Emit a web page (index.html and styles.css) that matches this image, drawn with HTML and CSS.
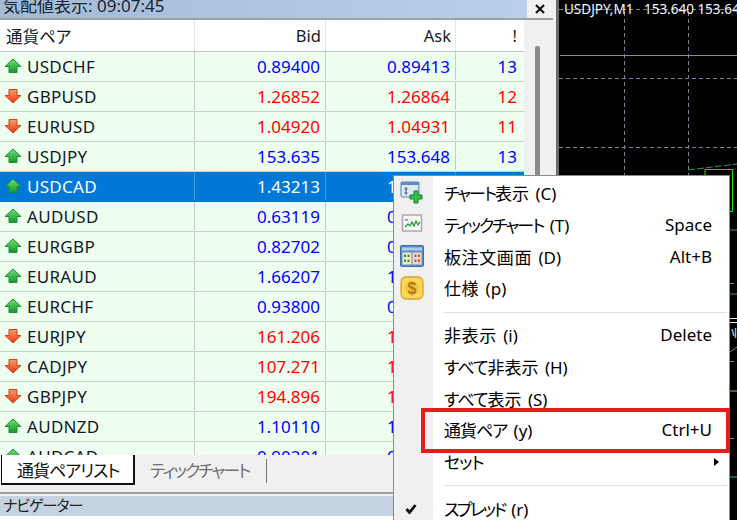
FILE: index.html
```html
<!DOCTYPE html>
<html lang="ja">
<head>
<meta charset="utf-8">
<title>気配値表示</title>
<link rel="stylesheet" href="styles.css">
</head>
<body>
<svg width="0" height="0" class="defs">
  <defs>
    <linearGradient id="gu" x1="0" y1="0" x2="0" y2="1"><stop offset="0" stop-color="#6fe06f"/><stop offset="1" stop-color="#129a2a"/></linearGradient>
    <linearGradient id="gd" x1="0" y1="0" x2="0" y2="1"><stop offset="0" stop-color="#ff9a6a"/><stop offset="1" stop-color="#e8380f"/></linearGradient>
    <symbol id="up" viewBox="0 0 18 16"><path d="M9 1 L17 8.500 L13 8.500 L13 14.500 L5 14.500 L5 8.500 L1 8.500 Z" fill="url(#gu)" stroke="#1c8a3a" stroke-width="1" stroke-linejoin="round"/></symbol>
    <symbol id="down" viewBox="0 0 18 16"><path d="M5 1.500 L13 1.500 L13 7.500 L17 7.500 L9 15 L1 7.500 L5 7.500 Z" fill="url(#gd)" stroke="#c8451c" stroke-width="1" stroke-linejoin="round"/></symbol>
  </defs>
</svg>
<div class="app">
  <section class="panel">
    <div class="titlebar"><span class="title">気配値表示: 09:07:45</span><span class="close"><svg width="10" height="10" viewBox="0 0 10 10"><path d="M1 1 L9 9 M9 1 L1 9" stroke="#111" stroke-width="2.200"/></svg></span></div>
    <div class="rule"></div>
    <div class="listarea">
      <div class="table">
        <div class="row head"><div class="c sym">通貨ペア</div><div class="c num">Bid</div><div class="c num">Ask</div><div class="c num last">!</div></div>
        <div class="row up"><div class="c sym"><svg class="arrow"><use href="#up"/></svg>USDCHF</div><div class="c num">0.89400</div><div class="c num">0.89413</div><div class="c num last">13</div></div>
        <div class="row down"><div class="c sym"><svg class="arrow"><use href="#down"/></svg>GBPUSD</div><div class="c num">1.26852</div><div class="c num">1.26864</div><div class="c num last">12</div></div>
        <div class="row down"><div class="c sym"><svg class="arrow"><use href="#down"/></svg>EURUSD</div><div class="c num">1.04920</div><div class="c num">1.04931</div><div class="c num last">11</div></div>
        <div class="row up"><div class="c sym"><svg class="arrow"><use href="#up"/></svg>USDJPY</div><div class="c num">153.635</div><div class="c num">153.648</div><div class="c num last">13</div></div>
        <div class="row sel"><div class="c sym"><svg class="arrow"><use href="#up"/></svg>USDCAD</div><div class="c num">1.43213</div><div class="c num">1.43226</div><div class="c num last">13</div></div>
        <div class="row up"><div class="c sym"><svg class="arrow"><use href="#up"/></svg>AUDUSD</div><div class="c num">0.63119</div><div class="c num">0.63130</div><div class="c num last">11</div></div>
        <div class="row up"><div class="c sym"><svg class="arrow"><use href="#up"/></svg>EURGBP</div><div class="c num">0.82702</div><div class="c num">0.82715</div><div class="c num last">13</div></div>
        <div class="row up"><div class="c sym"><svg class="arrow"><use href="#up"/></svg>EURAUD</div><div class="c num">1.66207</div><div class="c num">1.66229</div><div class="c num last">22</div></div>
        <div class="row up"><div class="c sym"><svg class="arrow"><use href="#up"/></svg>EURCHF</div><div class="c num">0.93800</div><div class="c num">0.93815</div><div class="c num last">15</div></div>
        <div class="row down"><div class="c sym"><svg class="arrow"><use href="#down"/></svg>EURJPY</div><div class="c num">161.206</div><div class="c num">161.220</div><div class="c num last">14</div></div>
        <div class="row down"><div class="c sym"><svg class="arrow"><use href="#down"/></svg>CADJPY</div><div class="c num">107.271</div><div class="c num">107.290</div><div class="c num last">19</div></div>
        <div class="row down"><div class="c sym"><svg class="arrow"><use href="#down"/></svg>GBPJPY</div><div class="c num">194.896</div><div class="c num">194.915</div><div class="c num last">19</div></div>
        <div class="row up"><div class="c sym"><svg class="arrow"><use href="#up"/></svg>AUDNZD</div><div class="c num">1.10110</div><div class="c num">1.10135</div><div class="c num last">25</div></div>
        <div class="row up"><div class="c sym"><svg class="arrow"><use href="#up"/></svg>AUDCAD</div><div class="c num">0.90201</div><div class="c num">0.90222</div><div class="c num last">21</div></div>
      </div>
      <div class="scroll"><div class="thumb"></div></div>
    </div>
    <div class="tabs">
      <div class="tab active"><span class="k1">通貨ペアリスト</span></div>
      <div class="tab"><span class="k2">ティックチャート</span></div>
    </div>
    <div class="tabrule"></div>
    <div class="navbar">ナビゲーター</div>
    <div class="navrow">口座 OANDA Japan Live</div>
  </section>
  <div class="divider"></div>
  <section class="chart">
    <div class="charttitle">USDJPY,M1&nbsp;&nbsp; 153.640 153.640</div>
    <svg class="plot" width="178" height="520" viewBox="0 0 178 520">
      <line x1="1" y1="55.500" x2="178" y2="55.500" stroke="#8a8f96"/>
      <g stroke="#74859a" stroke-dasharray="4 3" fill="none">
        <line x1="0" y1="9.500" x2="178" y2="9.500"/>
        <line x1="0" y1="78.500" x2="178" y2="78.500"/>
        <line x1="0" y1="147.500" x2="178" y2="147.500"/>
        <line x1="171" y1="283.500" x2="178" y2="283.500"/>
        <line x1="171" y1="361.500" x2="178" y2="361.500"/>
        <line x1="171" y1="438.500" x2="178" y2="438.500"/>
        <line x1="65.500" y1="12" x2="65.500" y2="175"/>
        <line x1="129.500" y1="12" x2="129.500" y2="175"/>
      </g>
      <path d="M129 170 L178 164" stroke="#1f9c5a" stroke-dasharray="7 2" fill="none"/>
      <path d="M146 175 V169.500 H173.500 V211.500 H171" stroke="#19e619" fill="none"/>
      <path d="M171 230 H178 M171 294 H178" stroke="#1f9c5a"/>
      <path d="M171 318.500 H178 M171 322.500 H178" stroke="#f0f0f0"/>
      <path d="M173 329 L175 336 M176.500 328 V338" stroke="#7fb6e8" stroke-width="1.500" fill="none"/>
      <path d="M171 352 L178 347" stroke="#2aa7a7" fill="none"/>
      <path d="M171 391 H178" stroke="#a0c040"/>
      <path d="M171 477 H178" stroke="#2aa7a7"/>
    </svg>
  </section>
</div>
<div class="menu">
  <div class="mi"><span class="ico"><svg width="24" height="24" viewBox="0 0 24 24"><rect x="1" y="1" width="18" height="15" rx="1" fill="#dce9f7" stroke="#4f81bd"/><rect x="1" y="1" width="18" height="3" fill="#5b8fc9"/><path d="M6 6v8M4.500 8h3M4.500 12h3" stroke="#555" fill="none"/><path d="M14 10h4v4h4v4h-4v4h-4v-4h-4v-4h4z" fill="#32c04a" stroke="#17802c"/></svg></span><span class="lbl"><span class="k2">チャート</span>表示 (C)</span></div>
  <div class="mi"><span class="ico"><svg width="24" height="24" viewBox="0 0 24 24"><rect x="2.500" y="2" width="19" height="16" fill="#f7f7f7" stroke="#aaa" stroke-width="1.500"/><path d="M5 7h3" stroke="#555"/><path d="M5 14l3-3 2 2 2-4 2 4 2-5 2 4 2-3" fill="none" stroke="#2e9a3c" stroke-width="1.300"/></svg></span><span class="lbl"><span class="k2">ティックチャート</span> (T)</span><span class="key">Space</span></div>
  <div class="mi"><span class="ico"><svg width="24" height="24" viewBox="0 0 24 24"><rect x="0.500" y="1.500" width="23" height="21" rx="1" fill="#5a8fcb" stroke="#3e6ea6"/><rect x="2" y="3.500" width="20" height="3" fill="#a9cdf0"/><rect x="2.500" y="8.500" width="9" height="12" fill="#e7f0c9"/><rect x="12.500" y="8.500" width="9" height="12" fill="#f7d5c8"/><path d="M4 10.500h2v2.500H4zM7.500 10.500h2v2.500h-2zM4 15.500h2v2.500H4zM7.500 15.500h2v2.500h-2z" fill="#5d7d3a"/><path d="M14.500 10.500h2v2.500h-2zM18 10.500h2v2.500h-2zM14.500 15.500h2v2.500h-2zM18 15.500h2v2.500h-2z" fill="#b85a50"/></svg></span><span class="lbl"><span class="j">板注文画面</span> (D)</span><span class="key">Alt+B</span></div>
  <div class="mi"><span class="ico"><svg width="24" height="24" viewBox="0 0 24 24"><rect x="1" y="1" width="22" height="22" rx="5" fill="#fbd75b" stroke="#d8a52a" stroke-width="1.300"/><circle cx="12" cy="12" r="7.500" fill="#f5c93f"/><text x="12" y="18" class="dollar">$</text></svg></span><span class="lbl"><span class="j">仕様</span> (p)</span></div>
  <div class="msep"></div>
  <div class="mi"><span class="lbl"><span class="j">非表示</span> (i)</span><span class="key">Delete</span></div>
  <div class="mi"><span class="lbl"><span class="k1">すべて</span>非表示 (H)</span></div>
  <div class="mi"><span class="lbl"><span class="k1">すべて</span>表示 (S)</span></div>
  <div class="mi"><span class="lbl"><span class="k1">通貨ペア</span> (y)</span><span class="key">Ctrl+U</span></div>
  <div class="mi"><span class="lbl"><span class="k1">セット</span></span><span class="sub"></span></div>
  <div class="msep"></div>
  <div class="mi"><span class="ico tick"><svg width="12" height="11" viewBox="0 0 12 11"><path d="M1.500 5.500 L4.500 9 L10.500 1.500" fill="none" stroke="#111" stroke-width="2.800"/></svg></span><span class="lbl"><span class="k3">スプレッド</span> (r)</span></div>
</div>
<div class="redbox"></div>
</body>
</html>
```
FILE: styles.css
```css
* { box-sizing: border-box; }
html, body { margin: 0; height: 520px; overflow: hidden; background: #f0f0f0; }
body { font-family: "Noto Sans", "Noto Sans CJK JP", sans-serif; font-size: 17px; font-feature-settings: "palt"; color: #000; position: relative; }
.defs { position: absolute; }
.app { display: flex; width: 737px; height: 520px; }
.panel { width: 553px; flex: none; display: flex; flex-direction: column; background: #f0f0f0; overflow: hidden; }
.titlebar { height: 18px; flex: none; display: flex; align-items: center; }
.title { width: 527px; height: 18px; line-height: 12px; padding-left: 3px; font-size: 17px; white-space: nowrap; overflow: hidden; color: #1a2530; background: linear-gradient(90deg, #a3bbd6, #b9d0ea); }
.close { width: 26px; display: flex; justify-content: center; align-items: center; height: 14px; }
.rule { height: 2px; background: #a0a0a0; flex: none; width: 553px; }
.listarea { height: 435px; display: flex; flex: none; overflow: hidden; }
.table { width: 524px; flex: none; }
.row { display: grid; grid-template-columns: 195px 131px 130px 67px; height: 30px; background: #efffef; border-bottom: 1px solid #c8cfc8; color: #0000ff; padding-bottom: 1px; }
.row.down { color: #ff0000; }
.row.sel { background: #0078d7; color: #fff; border-bottom-color: #0078d7; }
.row.head { height: 32px; background: #fff; color: #1a1a1a; border-bottom: 1px solid #c4c4c4; font-size: 16.500px; padding-bottom: 0; }
.c { display: flex; align-items: center; justify-content: flex-end; padding-right: 5px; border-right: 1px solid #c8c8c8; white-space: nowrap; }
.head .c { border-right-color: #e6e6e6; padding-right: 4px; }
.sel .c { border-right-color: #3f97df; }
.c.last { padding-right: 6px; border-right: 0; }
.c.sym { justify-content: flex-start; padding: 0; color: #10182a; letter-spacing: 0.3px; }
.sel .c.sym { color: #fff; }
.head .c.sym { padding-left: 6px; letter-spacing: 0; }
.arrow { width: 18px; height: 16px; margin: 0 5px 0 4px; flex: none; }
.scroll { width: 29px; flex: none; background: #f0f0f0; display: flex; justify-content: center; }
.thumb { width: 5px; height: 420px; margin-top: 26px; background: #8a8a8a; border-radius: 2px 2px 0 0; margin-right: 3px; }
.tabs { height: 30px; flex: none; display: flex; align-items: flex-start; background: #f0f0f0; }
.tab { height: 24px; margin-top: 4px; width: 132px; padding-left: 15px; font-size: 17px; line-height: 24px; color: #707070; border-right: 1px solid #777; white-space: nowrap; }
.tab.active { margin: 0 0 0 1px; height: 30px; width: 134px; padding-left: 15px; background: #fff; color: #111; border: 1px solid #111; border-top: 0; border-right-width: 2px; border-bottom-width: 2px; line-height: 31px; }
.tabrule { height: 2px; margin-top: 7px; flex: none; background: #a0a0a0; }
.navbar { height: 20px; margin-top: 2px; flex: none; font-size: 15px; letter-spacing: -1px; line-height: 18px; padding-left: 3px; background: #c5d3e1; color: #222; }
.navrow { height: 4px; flex: none; overflow: hidden; font-size: 17px; line-height: 26px; padding-left: 20px; background: #fff; color: #222; white-space: nowrap; }
.divider { width: 6px; flex: none; background: #f0f0f0; border-right: 3px solid #6a6a6a; }
.chart { flex: 1; background: #000; position: relative; overflow: hidden; }
.charttitle { position: absolute; left: 5px; top: 0; z-index: 1; color: #f4f8ff; font-size: 13.500px; line-height: 18px; white-space: nowrap; }
.plot { display: block; }
.menu { position: absolute; left: 393px; top: 175px; width: 337px; height: 345px; padding-top: 1px; background: linear-gradient(90deg, #f0f0f0 39px, #fff 39px); border: 1px solid #8a8a8a; border-bottom: 0; }
.mi { height: 31.700px; display: flex; align-items: center; position: relative; padding: 0 17px 0 50px; white-space: nowrap; }
.lbl { flex: 1; word-spacing: 2px; }
.key { flex: none; }
.k1 { letter-spacing: -1px; }
.k2 { letter-spacing: -2px; }
.k3 { letter-spacing: -2.400px; }
.j { letter-spacing: 0.600px; }
.ico { position: absolute; left: 6px; top: 50%; transform: translateY(-50%); display: flex; }
.tick { left: 11px; }
.dollar { font: 700 16px "Liberation Sans", sans-serif; fill: #b9780e; text-anchor: middle; }
.sub { width: 0; height: 0; border-left: 5px solid #000; border-top: 4px solid transparent; border-bottom: 4px solid transparent; margin-right: -7px; }
.msep { height: 15.300px; padding-top: 8px; margin-left: 50px; margin-right: 2px; }
.msep::before { content: ""; display: block; height: 1px; background: #e0e0e0; }
.redbox { position: absolute; left: 421px; top: 408px; width: 309px; height: 45px; border: 4px solid #e81c1c; }
```
